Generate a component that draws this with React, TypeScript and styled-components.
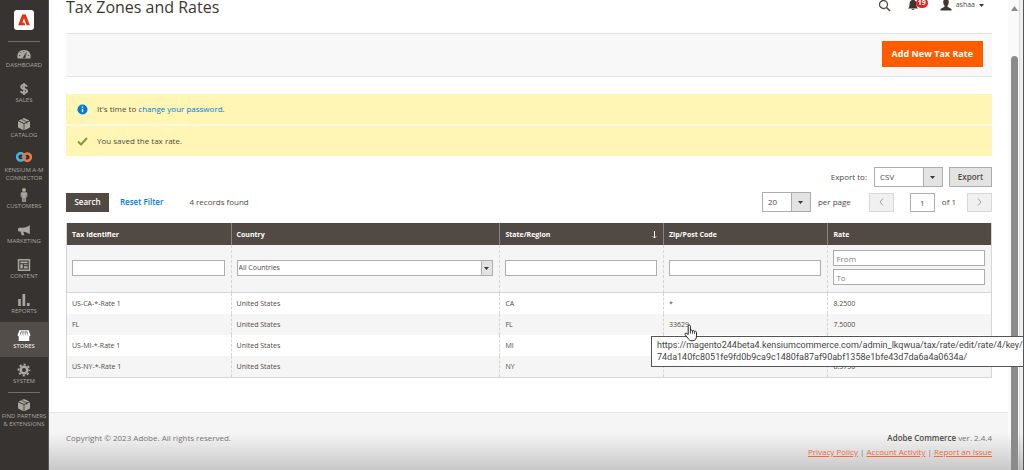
import React from "react";
import styled, { createGlobalStyle, css } from "styled-components";

const GlobalStyle = createGlobalStyle`
  *, *::before, *::after { box-sizing: border-box; }
  body { margin: 0; background: #fff; }
  body, button, input, select {
    font-family: "Open Sans", "Noto Sans", sans-serif;
    font-size: 8px;
    line-height: 12px;
    color: #514943;
  }
  button, select { cursor: pointer; }
  a { color: #007bdb; text-decoration: none; }
`;

const Page = styled.div`
  display: flex;
  min-height: 100vh;
  overflow: hidden;
`;

const Sidebar = styled.nav`
  flex: none;
  width: 49px;
  background: #373330;
  border-right: 1px solid #5a5653;
`;

const LogoLink = styled.a`
  display: flex;
  justify-content: center;
  height: 41px;
  padding-top: 10px;
`;

const Menu = styled.ul`
  margin: 0;
  padding: 0;
  list-style: none;
`;

const MenuItem = styled.li<{ $ruled?: boolean }>`
  ${(p) =>
    p.$ruled &&
    css`
      &::before {
        content: "";
        display: block;
        height: 1px;
        margin: 0 8px -1px;
        background: #736e69;
      }
    `}
`;

const MenuLink = styled.a<{ $active?: boolean }>`
  display: flex;
  flex-direction: column;
  align-items: center;
  min-height: 35px;
  padding-top: 6px;
  background: ${(p) => (p.$active ? "#524d49" : "transparent")};
  color: ${(p) => (p.$active ? "#fff" : "#aaa6a0")};
  font-size: 6px;
  line-height: 8px;
  text-align: center;
  text-transform: uppercase;
  white-space: pre;

  svg { flex: none; height: 14px; }
`;

const Column = styled.div`
  flex: 1;
  min-width: 0;
  display: flex;
  flex-direction: column;
`;

const Content = styled.main`
  flex: 1;
  padding: 0 16px 34px 17px;
`;

const Header = styled.header`
  display: flex;
  justify-content: space-between;
  height: 33px;
`;

const Title = styled.h1`
  margin: -5px 0 0;
  font-size: 16px;
  line-height: 24px;
  font-weight: 400;
  color: #41362f;
`;

const HeaderTools = styled.div`
  display: flex;
  align-items: center;
  gap: 14px;
  height: 10px;
  padding-right: 8px;
`;

const ToolButton = styled.button`
  position: relative;
  display: flex;
  align-items: center;
  gap: 4px;
  padding: 0;
  border: 0;
  background: none;
  font-size: 7px;
`;

const Count = styled.span`
  position: absolute;
  left: 8px;
  top: -1px;
  width: 12px;
  height: 10px;
  border-radius: 5px;
  background: #e22626;
  color: #fff;
  font-size: 7px;
  font-weight: 700;
  line-height: 10px;
  text-align: center;
`;

const Actions = styled.div`
  display: flex;
  justify-content: flex-end;
  align-items: center;
  height: 44px;
  padding: 0 9px 2px 0;
  border: solid #e3e3e3;
  border-width: 1px 0;
  background: #f8f8f8;
`;

const PrimaryButton = styled.button`
  height: 26px;
  padding: 0 9px;
  border: 1px solid #f55a00;
  background: #ff5c00;
  color: #fff;
  font-size: 9px;
  font-weight: 700;
`;

const Messages = styled.div`
  display: flex;
  flex-direction: column;
  gap: 2px;
  margin-top: 17px;
  background: #fffbe0;
`;

const Message = styled.div`
  display: flex;
  align-items: center;
  gap: 9px;
  height: 30px;
  padding-left: 11px;
  background: #fff6b5;
`;

const Toolbar = styled.div<{ $gap: number }>`
  display: flex;
  align-items: center;
  height: 20px;
  margin-top: ${(p) => p.$gap}px;
`;

const Spacer = styled.div`
  flex: 1;
`;

const ToolText = styled.span<{ $left?: number; $right?: number }>`
  margin-left: ${(p) => p.$left ?? 0}px;
  margin-right: ${(p) => p.$right ?? 0}px;
`;

const ToolLabel = styled.label`
  margin-right: 7px;
`;

const SelectBox = styled.span<{ $width: string; $button: number }>`
  position: relative;
  display: flex;
  width: ${(p) => p.$width};
  border: 1px solid #adadad;
  background: #fff;

  &::after {
    content: "";
    width: ${(p) => p.$button}px;
    border-left: 1px solid #adadad;
    background: #e3e3e3;
    pointer-events: none;
  }

  select {
    flex: 1;
    min-width: 0;
    border: 0;
    background: none;
    appearance: none;
    outline: 0;
  }

  > svg {
    position: absolute;
    right: ${(p) => Math.floor((p.$button - 5) / 2)}px;
    top: calc(50% - 1px);
    pointer-events: none;
  }
`;

const ToolSelect = styled.select`
  height: 18px;
  padding: 0 5px;
`;

const FilterSelect = styled.select`
  height: 14px;
  padding: 0 1px;
  font-size: 7px;
`;

const DarkButton = styled.button`
  width: 43px;
  height: 19px;
  padding: 0;
  border: 1px solid #514943;
  background: #514943;
  color: #fff;
  font-weight: 600;
`;

const TextButton = styled.button`
  margin: 0 26px 0 11px;
  padding: 0;
  border: 0;
  background: none;
  color: #007bdb;
  font-weight: 600;
`;

const GrayButton = styled.button`
  width: 43px;
  height: 20px;
  margin-left: 6px;
  padding: 0;
  border: 1px solid #adadad;
  background: #e3e3e3;
  font-weight: 600;
`;

const PagerButton = styled.button`
  display: flex;
  align-items: center;
  justify-content: center;
  width: 25px;
  height: 19px;
  padding: 0;
  border: 1px solid #d8d8d8;
  background: #f0f0f0;
`;

const PageInput = styled.input`
  width: 25px;
  height: 19px;
  margin: 0 7px 0 16px;
  padding: 0;
  border: 1px solid #adadad;
  text-align: center;
`;

const Grid = styled.table`
  width: 100%;
  margin-top: 11px;
  table-layout: fixed;
  border-collapse: separate;
  border-spacing: 0;
  border: solid #d6d6d6;
  border-width: 0 1px 1px;
  font-size: 7px;
`;

const Col = styled.col<{ $share: number }>`
  width: ${(p) => p.$share}%;
`;

const HeadCell = styled.th`
  height: 22px;
  padding: 1px 6px 0 5px;
  background: #514943;
  color: #fff;
  font-weight: 700;
  text-align: left;

  & + & { border-left: 1px solid #8a837f; }
`;

const SortLabel = styled.span`
  display: flex;
  justify-content: space-between;
  align-items: center;
`;

const FilterCell = styled.td`
  height: 48px;
  padding: 0 6px 2px 5px;
  border-bottom: 1px solid #d6d6d6;
  background: #f5f5f5;

  & + & { border-left: 1px dashed #d6d6d6; }
`;

const FilterFields = styled.div`
  display: flex;
  flex-direction: column;
  gap: 3px;
`;

const FilterInput = styled.input`
  display: block;
  width: 100%;
  height: 16px;
  padding: 0 2px;
  border: 1px solid #adadad;
  background: #fff;

  &::placeholder { color: #858079; opacity: 1; }
`;

const Row = styled.tr`
  &:nth-child(odd) { background: #f5f5f5; }
`;

const Cell = styled.td`
  height: 21px;
  padding: 0 5px;

  & + & { border-left: 1px dashed #d6d6d6; }
`;

const Footer = styled.footer`
  display: flex;
  justify-content: space-between;
  height: 58px;
  padding: 18px 16px 0 17px;
  border-top: 1px solid #e3e3e3;
  background: linear-gradient(#f5f5f5 35%, #c8c8c8);
  color: #777471;
  line-height: 14px;
`;

const Legal = styled.div`
  text-align: right;

  strong { color: #514943; font-weight: 600; }
  a { color: #ee6a40; text-decoration: underline; }
`;

const ScrollRail = styled.div`
  flex: none;
  display: flex;
  flex-direction: column;
  align-items: center;
  width: 16px;
  padding: 6px 2px 0 0;
  border-right: 1px solid #555;
  background:
    linear-gradient(transparent calc(100% - 38px), rgba(0, 0, 0, 0.2)),
    linear-gradient(90deg, #fafafa 11px, #dcdcdc 11px 12px, #efefef 12px);
`;

const ScrollThumb = styled.div`
  flex: 1;
  width: 7px;
  margin-top: 45px;
  border-radius: 4px 4px 0 0;
  background: #8b8b8b;
`;

const UrlTip = styled.span`
  position: absolute;
  z-index: 2;
  left: -18px;
  top: 17px;
  padding: 2px 0 3px 5px;
  border: 1px solid #555;
  background: #fff;
  color: #444;
  font-family: Roboto, "Open Sans", sans-serif;
  font-size: 9px;
  line-height: 12px;
  white-space: nowrap;
`;

const Hovered = styled.span`
  position: relative;
  display: inline-block;
`;

const Pointer = styled.svg`
  position: absolute;
  z-index: 3;
  left: 15px;
  top: 5px;
`;

const Caret = () => (
  <svg width="5" height="3" viewBox="0 0 5 3" aria-hidden="true">
    <path d="M0 0h5L2.5 3z" fill="#41362f" />
  </svg>
);

const AdobeLogo = () => (
  <svg width="20" height="20" viewBox="0 0 20 20" aria-label="Adobe">
    <rect width="20" height="20" rx="3" fill="#fff" />
    <path d="M8.2 4.5h3.6l4 10.8h-3.1L10 8.3l-1.7 4.2h2l.9 2.8H4.2z" fill="#eb2d12" />
  </svg>
);

const Hexagon = () => (
  <svg width="14" viewBox="0 0 14 14" fill="currentColor">
    <path d="M7 1l5.400 2.400L7 6 1.600 3.400zM1 4.200l5.600 2.600v6.500L1 10.500zM13 4.200L7.400 6.800v6.500l5.600-2.800z" />
    <path d="M4.300 2.200l5.400 2.500v2" fill="none" stroke="#373330" strokeWidth=".7" />
  </svg>
);

const icons: Record<string, React.ReactNode> = {
  dashboard: (
    <svg width="14" viewBox="0 0 14 14" fill="currentColor">
      <path d="M.7 11.500A6.300 6.300 0 0 1 7 3a6.300 6.300 0 0 1 6.300 8.500z" />
      <path d="M6 10.800L9.300 5.500 8 11z" fill="#373330" stroke="#373330" strokeWidth=".5" />
      <path d="M2 8.500h1.300M3.500 5.300l.9.900M6.800 4v1.200M10.900 8.500h1.200" stroke="#373330" strokeWidth=".8" />
    </svg>
  ),
  sales: (
    <svg width="14" viewBox="0 0 14 14" fill="none" stroke="currentColor" strokeWidth="1.800">
      <path d="M10 4.600C9.500 3.300 8.400 3 7 3 5.300 3 4.200 3.700 4.200 4.900c0 2.700 5.900 1.300 5.900 4.200C10.100 10.400 8.800 11 7 11c-1.700 0-2.800-.6-3.200-2M7 1v12" />
    </svg>
  ),
  catalog: <Hexagon />,
  kensium: (
    <svg width="16" viewBox="0 0 16 14" fill="none" strokeWidth="2.600">
      <path d="M8.300 3.600A3.700 3.700 0 1 0 7.500 7.400L9.500 4" stroke="#3fb4ea" />
      <path d="M7.700 6.400A3.700 3.700 0 1 0 8.500 2.600L6.500 6" stroke="#f4743b" />
    </svg>
  ),
  customers: (
    <svg width="14" viewBox="0 0 14 14" fill="currentColor">
      <circle cx="7" cy="2" r="2" />
      <path d="M5 4.300h4q1.300 0 1.300 1.300v3.700H9.200V6.800h-.3V14H7.300v-4h-.6v4H5.100V6.800h-.3v2.500H3.700V5.600Q3.700 4.300 5 4.300z" />
    </svg>
  ),
  marketing: (
    <svg width="14" viewBox="0 0 14 14" fill="currentColor">
      <path d="M12.800 2v9.300C10.500 9.500 8.500 8.800 6.300 8.700l1 3.500H4.800L3.600 8.600H2.200C.6 8.600.6 4.800 2.200 4.800h4C8.500 4.700 10.500 3.900 12.800 2z" />
    </svg>
  ),
  content: (
    <svg width="14" viewBox="0 0 14 14" fill="currentColor">
      <path fillRule="evenodd" d="M.8 1h12.400v12H.8zM2.300 2.500v9h9.400v-9z" />
      <path d="M3.300 3.600h7.400v1.700H3.300zM3.300 6.300h2.500v4.200H3.300zM6.800 6.300h3.900v1H6.800zM6.800 8.200h3.900v2.300H6.800z" />
    </svg>
  ),
  reports: (
    <svg width="14" viewBox="0 0 14 14" fill="currentColor">
      <path d="M1.200 6h2.600v7H1.200zM5.500 1h2.700v12H5.500zM9.900 10h2.700v3H9.900z" />
    </svg>
  ),
  stores: (
    <svg width="14" viewBox="0 0 14 14" fill="currentColor">
      <path d="M2.500 2h9l1.900 5c0 1.400-2 1.700-2.300.3-.3 1.300-2 1.300-2.100 0-.3 1.300-2 1.300-2.100 0-.2 1.300-1.900 1.300-2.100 0-.2 1.300-1.900 1.300-2 0C2.500 8.700.6 8.400.6 7z" />
      <path d="M1.700 8h10.600v5H1.700z" />
      <path d="M4.500 2.500L3.400 6.500M6.200 2.500l-.4 4M8 2.500l.3 4M9.700 2.500l.9 4" stroke="#524d49" strokeWidth=".8" />
    </svg>
  ),
  system: (
    <svg width="14" viewBox="0 0 14 14">
      <circle cx="7" cy="7" r="3.300" fill="none" stroke="currentColor" strokeWidth="2.600" />
      <circle
        cx="7"
        cy="7"
        r="5.400"
        fill="none"
        stroke="currentColor"
        strokeWidth="2"
        strokeDasharray="2.120 2.120"
        strokeDashoffset="1.060"
      />
    </svg>
  ),
  partners: <Hexagon />,
};

const menu = [
  { id: "dashboard", label: "Dashboard", ruled: true },
  { id: "sales", label: "Sales" },
  { id: "catalog", label: "Catalog" },
  { id: "kensium", label: "Kensium A-M\nConnector" },
  { id: "customers", label: "Customers" },
  { id: "marketing", label: "Marketing" },
  { id: "content", label: "Content" },
  { id: "reports", label: "Reports" },
  { id: "stores", label: "Stores", active: true },
  { id: "system", label: "System" },
  { id: "partners", label: "Find Partners\n& Extensions", ruled: true },
];

const rates = [
  { id: "US-CA-*-Rate 1", country: "United States", region: "CA", zip: "*", rate: "8.2500" },
  { id: "FL", country: "United States", region: "FL", zip: "33629", rate: "7.5000" },
  { id: "US-MI-*-Rate 1", country: "United States", region: "MI", zip: "", rate: "" },
  { id: "US-NY-*-Rate 1", country: "United States", region: "NY", zip: "", rate: "8.3750" },
];

const HoveredZip = ({ zip }: { zip: string }) => (
  <Hovered>
    {zip}
    <UrlTip role="tooltip">
      https://magento244beta4.kensiumcommerce.com/admin_lkqwua/tax/rate/edit/rate/4/key/
      <br />
      74da140fc8051fe9fd0b9ca9c1480fa87af90abf1358e1bfe43d7da6a4a0634a/
    </UrlTip>
    <Pointer width="14" height="18" viewBox="0 0 14 18" aria-hidden="true">
      <path
        d="M4.200 10.500V2.200c0-1.600 2.200-1.600 2.200 0v4.500c.3-1 2-.9 2.100.3.500-.8 1.900-.5 2 .6.700-.7 2-.3 2 .9v3.300c0 3-1.300 5-4.200 5-2.200 0-3.300-.8-4.300-2.500L1.200 10.800c-.8-1.300.8-2.200 1.700-1.300z"
        fill="#fff"
        stroke="#222"
      />
      <path d="M6.400 6.700v3M8.500 7v2.800M10.500 7.600v2.300" stroke="#222" strokeWidth=".8" />
    </Pointer>
  </Hovered>
);

export default function App() {
  return (
    <>
      <GlobalStyle />
      <Page>
        <Sidebar>
          <LogoLink href="#home">
            <AdobeLogo />
          </LogoLink>
          <Menu>
            {menu.map((m) => (
              <MenuItem key={m.id} $ruled={m.ruled}>
                <MenuLink href={`#${m.id}`} $active={m.active}>
                  {icons[m.id]}
                  {m.label}
                </MenuLink>
              </MenuItem>
            ))}
          </Menu>
        </Sidebar>

        <Column>
          <Content>
            <Header>
              <Title>Tax Zones and Rates</Title>
              <HeaderTools>
                <ToolButton aria-label="Search">
                  <svg width="16" height="13" viewBox="0 0 16 13" fill="none" stroke="#514943">
                    <circle cx="5.500" cy="5.500" r="4" strokeWidth="1.300" />
                    <path d="M8.500 8.500l3.500 3.500" strokeWidth="1.600" />
                  </svg>
                </ToolButton>
                <ToolButton aria-label="Notifications">
                  <svg width="18" height="12" viewBox="0 0 18 12" fill="#41362f">
                    <path d="M5 1c2.700 0 3.300 2 3.400 4 .1 2.500.6 3.300 1.600 4.500H0C1 8.300 1.500 7.500 1.600 5 1.700 3 2.300 1 5 1zM3.500 10h3q-1.500 2-3 0z" />
                  </svg>
                  <Count>19</Count>
                </ToolButton>
                <ToolButton>
                  <svg width="12" height="12" viewBox="0 0 12 12" fill="#41362f">
                    <path d="M6 0c2 0 2.800 1.300 2.800 3S8 6 7.500 6.500v1.300L11.500 10v1.500H.5V10l4-2.200V6.500C4 6 3.200 4.700 3.200 3S4 0 6 0z" />
                  </svg>
                  <span>ashaa</span>
                  <Caret />
                </ToolButton>
              </HeaderTools>
            </Header>

            <Actions>
              <PrimaryButton>Add New Tax Rate</PrimaryButton>
            </Actions>

            <Messages>
              <Message>
                <svg width="11" height="11" viewBox="0 0 11 11">
                  <circle cx="5.500" cy="5.500" r="5" fill="#007bdb" />
                  <path d="M5.500 4.700v3.600M5.500 2.500v1.300" stroke="#fff" strokeWidth="1.400" />
                </svg>
                <span>
                  It's time to <a href="#password">change your password</a>.
                </span>
              </Message>
              <Message>
                <svg width="11" height="11" viewBox="0 0 11 11">
                  <path d="M1 5.500l3 3L10 2" fill="none" stroke="#79a22e" strokeWidth="2" />
                </svg>
                <span>You saved the tax rate.</span>
              </Message>
            </Messages>

            <Toolbar $gap={11}>
              <Spacer />
              <ToolLabel htmlFor="export">Export to:</ToolLabel>
              <SelectBox $width="69px" $button={19}>
                <ToolSelect id="export">
                  <option>CSV</option>
                </ToolSelect>
                <Caret />
              </SelectBox>
              <GrayButton>Export</GrayButton>
            </Toolbar>

            <Toolbar $gap={5}>
              <DarkButton>Search</DarkButton>
              <TextButton>Reset Filter</TextButton>
              <ToolText>4 records found</ToolText>
              <Spacer />
              <SelectBox $width="49px" $button={19}>
                <ToolSelect id="limit">
                  <option>20</option>
                </ToolSelect>
                <Caret />
              </SelectBox>
              <ToolText as="label" htmlFor="limit" $left={7} $right={18}>
                per page
              </ToolText>
              <PagerButton aria-label="Previous page" disabled>
                <svg width="5" height="8" viewBox="0 0 5 8" fill="none" stroke="#a5a19e">
                  <path d="M4 .5L1 4l3 3.500" />
                </svg>
              </PagerButton>
              <PageInput aria-label="Page" defaultValue="1" />
              <ToolText $right={11}>of 1</ToolText>
              <PagerButton aria-label="Next page" disabled>
                <svg width="5" height="8" viewBox="0 0 5 8" fill="none" stroke="#a5a19e">
                  <path d="M1 .5L4 4 1 7.500" />
                </svg>
              </PagerButton>
            </Toolbar>

            <Grid>
              <colgroup>
                <Col $share={17.7} />
                <Col $share={29.1} />
                <Col $share={17.7} />
                <Col $share={17.8} />
                <Col $share={17.7} />
              </colgroup>
              <thead>
                <tr>
                  <HeadCell>Tax Identifier</HeadCell>
                  <HeadCell>Country</HeadCell>
                  <HeadCell>
                    <SortLabel>
                      State/Region
                      <svg width="5" height="8" viewBox="0 0 5 8" fill="none" stroke="#fff">
                        <path d="M2.500 0v7M.8 5.300L2.500 7l1.700-1.700" strokeWidth=".9" />
                      </svg>
                    </SortLabel>
                  </HeadCell>
                  <HeadCell>Zip/Post Code</HeadCell>
                  <HeadCell>Rate</HeadCell>
                </tr>
              </thead>
              <tbody>
                <tr>
                  <FilterCell>
                    <FilterInput aria-label="Tax Identifier" />
                  </FilterCell>
                  <FilterCell>
                    <SelectBox $width="100%" $button={11}>
                      <FilterSelect aria-label="Country">
                        <option>All Countries</option>
                      </FilterSelect>
                      <Caret />
                    </SelectBox>
                  </FilterCell>
                  <FilterCell>
                    <FilterInput aria-label="State/Region" />
                  </FilterCell>
                  <FilterCell>
                    <FilterInput aria-label="Zip/Post Code" />
                  </FilterCell>
                  <FilterCell>
                    <FilterFields>
                      <FilterInput aria-label="Rate from" placeholder="From" />
                      <FilterInput aria-label="Rate to" placeholder="To" />
                    </FilterFields>
                  </FilterCell>
                </tr>
                {rates.map((r) => (
                  <Row key={r.id}>
                    <Cell>{r.id}</Cell>
                    <Cell>{r.country}</Cell>
                    <Cell>{r.region}</Cell>
                    <Cell>{r.id === "FL" ? <HoveredZip zip={r.zip} /> : r.zip}</Cell>
                    <Cell>{r.rate}</Cell>
                  </Row>
                ))}
              </tbody>
            </Grid>
          </Content>

          <Footer>
            <span>Copyright © 2023 Adobe. All rights reserved.</span>
            <Legal>
              <div>
                <strong>Adobe Commerce</strong> ver. 2.4.4
              </div>
              <a href="#privacy">Privacy Policy</a> | <a href="#activity">Account Activity</a> |{" "}
              <a href="#issue">Report an Issue</a>
            </Legal>
          </Footer>
        </Column>

        <ScrollRail aria-hidden="true">
          <svg width="7" height="5" viewBox="0 0 7 5">
            <path d="M3.500 0L7 5H0z" fill="#8b8b8b" />
          </svg>
          <ScrollThumb />
        </ScrollRail>
      </Page>
    </>
  );
}
